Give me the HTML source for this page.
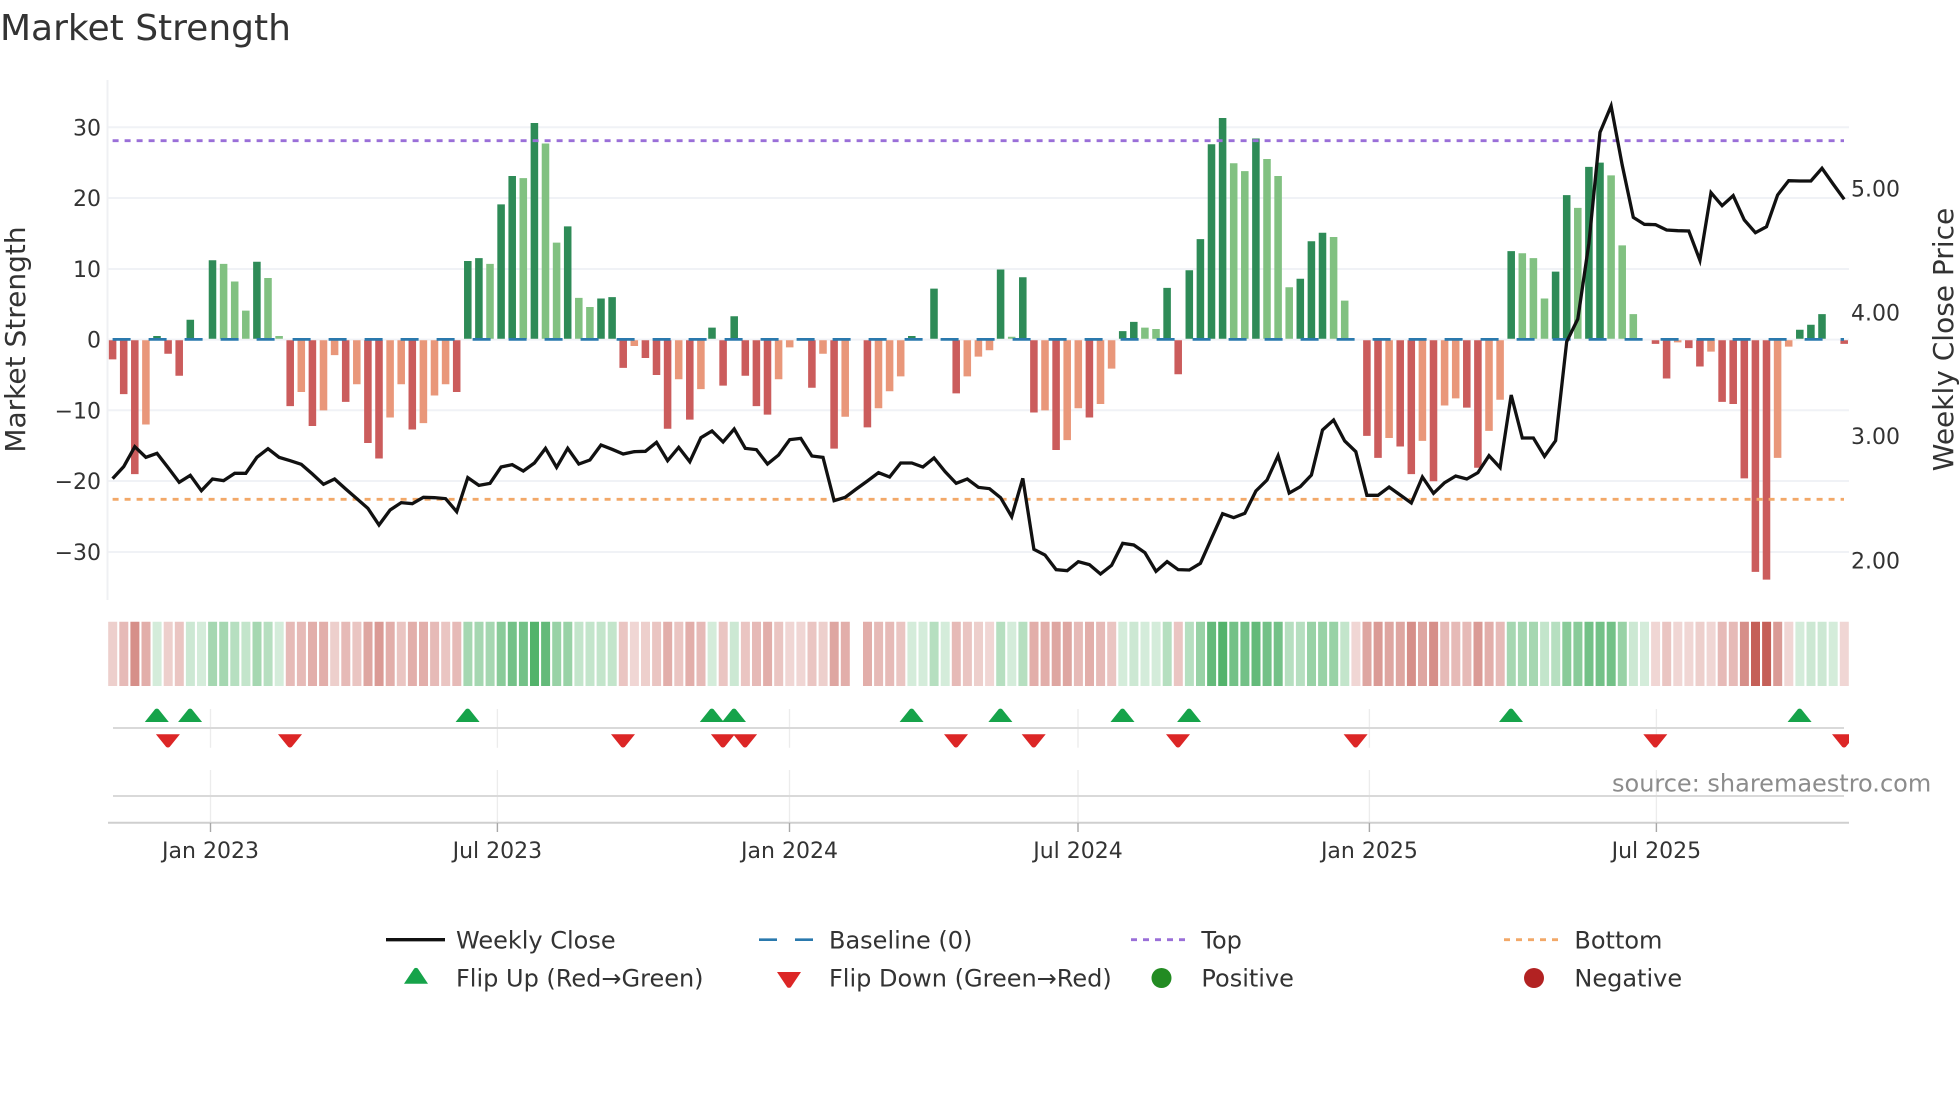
<!DOCTYPE html>
<html lang="en">
<head>
<meta charset="utf-8">
<title>Market Strength</title>
<style>
html,body{margin:0;padding:0;background:#fff;width:1960px;height:1102px;overflow:hidden}
svg{display:block;position:absolute;left:0;top:0}
text{font-family:"DejaVu Sans","Liberation Sans",sans-serif;fill:#333}
.t{font-size:22px}
.l{font-size:24px}
</style>
</head>
<body>
<svg width="1960" height="1102" viewBox="0 0 1960 1102" xmlns="http://www.w3.org/2000/svg">
<defs>
<clipPath id="c"><rect x="100" y="700" width="1749" height="60"/></clipPath>
<clipPath id="pos"><rect x="100" y="60" width="1760" height="278.8"/></clipPath>
<clipPath id="neg"><rect x="100" y="340.2" width="1760" height="270"/></clipPath>
</defs>
<rect width="1960" height="1102" fill="#fff"/>
<text x="0" y="40" font-size="36">Market Strength</text>

<!-- grid -->
<path d="M108 127.3H1849M108 198H1849M108 269H1849M108 410.3H1849M108 481H1849M108 552H1849M108 339.6H1849" stroke="#f0f2f6" stroke-width="2" fill="none"/>
<path d="M107.5 80V600" stroke="#eff0f3" stroke-width="2" fill="none"/>

<!-- bars -->
<g clip-path="url(#pos)"><g transform="translate(112.6,339.6) scale(11.1,-7.08)" fill="none" stroke-width=".68">
<path stroke="#2e8b57" d="M4 0V.5M7 0V2.8M9 0V11.2M13 0V11M32 0V11.1M33 0V11.5M35 0V19.1M36 0V23.1M38 0V30.6M41 0V16M44 0V5.8M45 0V6M54 0V1.7M56 0V3.3M72 0V.5M74 0V7.2M80 0V9.9M82 0V8.8M91 0V1.2M92 0V2.5M95 0V7.3M97 0V9.8M98 0V14.2M99 0V27.6M100 0V31.3M103 0V28.4M107 0V8.6M108 0V13.9M109 0V15.1M126 0V12.5M130 0V9.6M131 0V20.4M133 0V24.4M134 0V25M152 0V1.4M153 0V2.1M154 0V3.6"/>
<path stroke="#81c181" d="M10 0V10.7M11 0V8.2M12 0V4.1M14 0V8.7M15 0V.5M34 0V10.7M37 0V22.8M39 0V27.7M40 0V13.7M42 0V5.9M43 0V4.6M81 0V.4M93 0V1.7M94 0V1.5M101 0V24.9M102 0V23.8M104 0V25.5M105 0V23.1M106 0V7.4M110 0V14.5M111 0V5.5M127 0V12.2M128 0V11.5M129 0V5.8M132 0V18.6M135 0V23.2M136 0V13.3M137 0V3.6"/>
</g></g>
<g clip-path="url(#neg)"><g transform="translate(112.6,339.6) scale(11.1,-7.08)" fill="none" stroke-width=".68">
<path stroke="#cb5c5c" d="M0 0V-2.8M1 0V-7.7M2 0V-19M5 0V-2M6 0V-5.1M16 0V-9.4M18 0V-12.2M21 0V-8.8M23 0V-14.6M24 0V-16.8M27 0V-12.7M31 0V-7.4M46 0V-4M48 0V-2.6M49 0V-5M50 0V-12.6M52 0V-11.3M55 0V-6.5M57 0V-5.1M58 0V-9.4M59 0V-10.6M63 0V-6.8M65 0V-15.4M68 0V-12.4M76 0V-7.6M83 0V-10.3M85 0V-15.6M88 0V-11M96 0V-4.9M113 0V-13.6M114 0V-16.7M116 0V-15.1M117 0V-19M119 0V-20M122 0V-9.6M123 0V-18.1M139 0V-.6M140 0V-5.5M142 0V-1.2M143 0V-3.8M145 0V-8.8M146 0V-9.1M147 0V-19.6M148 0V-32.8M149 0V-33.9M156 0V-.6"/>
<path stroke="#e9977a" d="M3 0V-12M17 0V-7.4M19 0V-10M20 0V-2.2M22 0V-6.3M25 0V-11M26 0V-6.3M28 0V-11.8M29 0V-7.9M30 0V-6.3M47 0V-.9M51 0V-5.6M53 0V-7M60 0V-5.6M61 0V-1.1M64 0V-2M66 0V-10.9M69 0V-9.7M70 0V-7.3M71 0V-5.2M77 0V-5.2M78 0V-2.4M79 0V-1.5M84 0V-10M86 0V-14.2M87 0V-9.7M89 0V-9.1M90 0V-4.1M115 0V-13.9M118 0V-14.3M120 0V-9.3M121 0V-8.3M124 0V-12.9M125 0V-8.5M141 0V-.4M144 0V-1.7M150 0V-16.7M151 0V-1"/>
</g></g>

<!-- reference lines -->
<path d="M112.6 339.4H1844" stroke="#2a79ad" stroke-width="2.7" stroke-dasharray="18 18" fill="none"/>
<path d="M112.6 140.7H1844" stroke="#9a6fd8" stroke-width="2.8" stroke-dasharray="6 6" fill="none"/>
<path d="M112.6 499.3H1844" stroke="#f2a868" stroke-width="2.8" stroke-dasharray="6 6" fill="none"/>

<!-- weekly close -->
<polyline transform="translate(112.6,340) scale(11.1,.33333)" fill="none" stroke="#111" stroke-width="3.3" stroke-linejoin="miter" points="0,416 1,380 2,320 3,352 4,340 5,383 6,427 7,406 8,452 9,417 10,422 11,400 12,400 13,352 14,326 15,352 16,362 17,373 18,402 19,433 20,417 21,447 22,476 23,505 24,555 25,510 26,488 27,491 28,472 29,473 30,476 31,515 32,413 33,436 34,430 35,381 36,374 37,393 38,369 39,325 40,382 41,325 42,372 43,360 44,315 45,328 46,342 47,335 48,334 49,307 50,362 51,322 52,365 53,293 54,273 55,306 56,267 57,325 58,329 59,372 60,345 61,299 62,295 63,348 64,352 65,482 66,472 67,447 68,423 69,398 70,411 71,369 72,369 73,381 74,354 75,395 76,430 77,417 78,442 79,446 80,473 81,530 82,415 83,628 84,645 85,689 86,692 87,665 88,674 89,702 90,676 91,610 92,615 93,638 94,694 95,665 96,689 97,690 98,670 99,595 100,521 101,533 102,520 103,453 104,420 105,347 106,459 107,440 108,405 109,270 110,240 111,303 112,335 113,466 114,466 115,441 116,465 117,489 118,411 119,460 120,428 121,408 122,417 123,398 124,347 125,383 126,165 127,294 128,294 129,349 130,302 131,5 132,-63 133,-290 134,-623 135,-702 136,-525 137,-368 138,-347 139,-346 140,-330 141,-328 142,-327 143,-239 144,-442 145,-403 146,-433 147,-360 148,-322 149,-340 150,-435 151,-478 152,-477 153,-477 154,-515 155,-468 156,-422" style="vector-effect:non-scaling-stroke"/>

<!-- heat strip -->
<g transform="translate(112.7,621.7) scale(11.1,64.3)" fill="none" stroke-width=".81">
<g stroke="#bb443b">
<path stroke-opacity=".22" d="M47 0V1M61 0V1M62 0V1M79 0V1M112 0V1M139 0V1M141 0V1M142 0V1M144 0V1M151 0V1M156 0V1"/>
<path stroke-opacity=".26" d="M0 0V1M5 0V1M20 0V1M48 0V1M64 0V1M78 0V1M143 0V1"/>
<path stroke-opacity=".31" d="M6 0V1M22 0V1M26 0V1M30 0V1M46 0V1M49 0V1M51 0V1M55 0V1M57 0V1M60 0V1M63 0V1M71 0V1M77 0V1M90 0V1M96 0V1M140 0V1"/>
<path stroke-opacity=".37" d="M1 0V1M16 0V1M17 0V1M21 0V1M29 0V1M31 0V1M53 0V1M58 0V1M69 0V1M70 0V1M76 0V1M87 0V1M89 0V1M120 0V1M121 0V1M122 0V1M125 0V1M145 0V1M146 0V1"/>
<path stroke-opacity=".43" d="M3 0V1M18 0V1M19 0V1M25 0V1M27 0V1M28 0V1M50 0V1M52 0V1M59 0V1M66 0V1M68 0V1M83 0V1M84 0V1M88 0V1M124 0V1"/>
<path stroke-opacity=".48" d="M23 0V1M65 0V1M85 0V1M86 0V1M113 0V1M115 0V1M116 0V1M118 0V1"/>
<path stroke-opacity=".54" d="M24 0V1M114 0V1M123 0V1M150 0V1"/>
<path stroke-opacity=".6" d="M2 0V1M117 0V1M119 0V1M147 0V1"/>
<path stroke-opacity=".85" d="M148 0V1M149 0V1"/>
</g>
<g stroke="#28a046">
<path stroke-opacity=".2" d="M4 0V1M8 0V1M15 0V1M54 0V1M72 0V1M73 0V1M75 0V1M81 0V1M91 0V1M93 0V1M94 0V1M138 0V1M152 0V1M155 0V1"/>
<path stroke-opacity=".24" d="M7 0V1M56 0V1M92 0V1M137 0V1M153 0V1M154 0V1"/>
<path stroke-opacity=".28" d="M12 0V1M42 0V1M43 0V1M44 0V1M45 0V1M111 0V1M129 0V1"/>
<path stroke-opacity=".34" d="M11 0V1M14 0V1M74 0V1M80 0V1M82 0V1M95 0V1M97 0V1M106 0V1M107 0V1M130 0V1"/>
<path stroke-opacity=".42" d="M9 0V1M10 0V1M13 0V1M32 0V1M33 0V1M34 0V1M126 0V1M127 0V1M128 0V1"/>
<path stroke-opacity=".48" d="M40 0V1M41 0V1M98 0V1M108 0V1M109 0V1M110 0V1M136 0V1"/>
<path stroke-opacity=".55" d="M35 0V1M131 0V1M132 0V1"/>
<path stroke-opacity=".65" d="M36 0V1M37 0V1M101 0V1M102 0V1M104 0V1M105 0V1M133 0V1M134 0V1M135 0V1"/>
<path stroke-opacity=".72" d="M39 0V1M99 0V1M103 0V1"/>
<path stroke-opacity=".8" d="M38 0V1M100 0V1"/>
</g>
</g>

<!-- lower panels -->
<path d="M210.5 709V747.7M497.4 709V747.7M789.5 709V747.7M1078 709V747.7M1369.4 709V747.7M1656.4 709V747.7M210.5 770V822M497.4 770V822M789.5 770V822M1078 770V822M1369.4 770V822M1656.4 770V822" stroke="#ececec" stroke-width="1.3" fill="none"/>
<path d="M113 728H1844M113 796H1844" stroke="#d9d9d9" stroke-width="2" fill="none"/>
<path d="M108 822.7H1849" stroke="#cfcfcf" stroke-width="2" fill="none"/>
<path d="M210.5 823V832M497.4 823V832M789.5 823V832M1078 823V832M1369.4 823V832M1656.4 823V832" stroke="#a8a8a8" stroke-width="1.4" fill="none"/>

<path fill="#16a34a" d="M144.8 722l10.2-12.8q1.8-1.2 3.6 0l10.2 12.8zM178.1 722l10.2-12.8q1.8-1.2 3.6 0l10.2 12.8zM455.6 722l10.2-12.8q1.8-1.2 3.6 0l10.2 12.8zM699.8 722l10.2-12.8q1.8-1.2 3.6 0l10.2 12.8zM722 722l10.2-12.8q1.8-1.2 3.6 0l10.2 12.8zM899.6 722l10.2-12.8q1.8-1.2 3.6 0l10.2 12.8zM988.4 722l10.2-12.8q1.8-1.2 3.6 0l10.2 12.8zM1110.5 722l10.2-12.8q1.8-1.2 3.6 0l10.2 12.8zM1177.1 722l10.2-12.8q1.8-1.2 3.6 0l10.2 12.8zM1499 722l10.2-12.8q1.8-1.2 3.6 0l10.2 12.8zM1787.6 722l10.2-12.8q1.8-1.2 3.6 0l10.2 12.8z"/>
<g clip-path="url(#c)"><path fill="#dc2626" d="M155.9 734.3l10.2 12.6q1.8 1.2 3.6 0l10.2-12.6zM278 734.3l10.2 12.6q1.8 1.2 3.6 0l10.2-12.6zM611 734.3l10.2 12.6q1.8 1.2 3.6 0l10.2-12.6zM710.9 734.3l10.2 12.6q1.8 1.2 3.6 0l10.2-12.6zM733.1 734.3l10.2 12.6q1.8 1.2 3.6 0l10.2-12.6zM944 734.3l10.2 12.6q1.8 1.2 3.6 0l10.2-12.6zM1021.7 734.3l10.2 12.6q1.8 1.2 3.6 0l10.2-12.6zM1166 734.3l10.2 12.6q1.8 1.2 3.6 0l10.2-12.6zM1343.6 734.3l10.2 12.6q1.8 1.2 3.6 0l10.2-12.6zM1643.3 734.3l10.2 12.6q1.8 1.2 3.6 0l10.2-12.6zM1832 734.3l10.2 12.6q1.8 1.2 3.6 0l10.2-12.6z"/></g>

<!-- left ticks -->
<g text-anchor="end">
<text class="t" x="101" y="135.5">30</text>
<text class="t" x="101" y="206">20</text>
<text class="t" x="101" y="277">10</text>
<text class="t" x="101" y="347.6">0</text>
<text class="t" x="101" y="418.3">−10</text>
<text class="t" x="101" y="489">−20</text>
<text class="t" x="101" y="560">−30</text>
</g>
<!-- right ticks -->
<text class="t" x="1851" y="196.5">5.00</text>
<text class="t" x="1851" y="320.7">4.00</text>
<text class="t" x="1851" y="444">3.00</text>
<text class="t" x="1851" y="568.5">2.00</text>

<text transform="translate(25,339.5) rotate(-90)" text-anchor="middle" font-size="28">Market Strength</text>
<text transform="translate(1953,339.5) rotate(-90)" text-anchor="middle" font-size="28">Weekly Close Price</text>

<!-- x ticks -->
<g text-anchor="middle">
<text class="t" x="210.5" y="858">Jan 2023</text>
<text class="t" x="497.4" y="858">Jul 2023</text>
<text class="t" x="789.5" y="858">Jan 2024</text>
<text class="t" x="1078" y="858">Jul 2024</text>
<text class="t" x="1369.4" y="858">Jan 2025</text>
<text class="t" x="1656.4" y="858">Jul 2025</text>
</g>

<text x="1612" y="791.7" font-size="24" style="fill:#8c8c8c">source: sharemaestro.com</text>

<!-- legend -->
<path d="M386 939.7H445" stroke="#111" stroke-width="3.4" fill="none"/>
<text class="l" x="456" y="948.7">Weekly Close</text>
<path d="M404 983.7l10.2-15.2q1.8-1.2 3.6 0l10.2 15.2z" fill="#16a34a"/>
<text class="l" x="456" y="986.7">Flip Up (Red→Green)</text>

<path d="M759 939.7H777M795 939.7H813" stroke="#2a79ad" stroke-width="2.7" fill="none"/>
<text class="l" x="829" y="948.7">Baseline (0)</text>
<path d="M777 972l10.2 15.2q1.8 1.2 3.6 0l10.2-15.2z" fill="#dc2626"/>
<text class="l" x="829" y="986.7">Flip Down (Green→Red)</text>

<path d="M1131 939.7H1186" stroke="#9a6fd8" stroke-width="2.8" stroke-dasharray="6 6" fill="none"/>
<text class="l" x="1201.4" y="948.7">Top</text>
<circle cx="1161.5" cy="978" r="10" fill="#228b22"/>
<text class="l" x="1201.4" y="986.7">Positive</text>

<path d="M1504 939.7H1559" stroke="#f2a868" stroke-width="2.8" stroke-dasharray="6 6" fill="none"/>
<text class="l" x="1574.4" y="948.7">Bottom</text>
<circle cx="1534" cy="978" r="10" fill="#b22222"/>
<text class="l" x="1574.4" y="986.7">Negative</text>
</svg>
</body>
</html>
